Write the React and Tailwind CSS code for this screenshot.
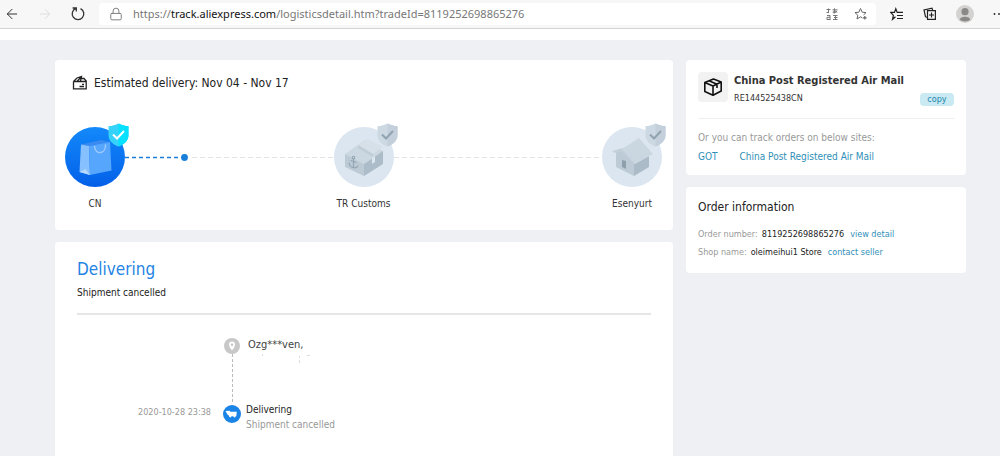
import * as React from 'react';
import { ArrowLeft, ArrowRight, Lock } from 'lucide-react';

const ORDER_ID = '8119252698865276';

function Shield({ active }) {
  return (
    <svg viewBox="0 0 21 24" className="absolute -top-1 left-[43px] h-6 w-[21px]">
      <path d="M10.5 0.5 C13.5 2 17 3 20.5 3.2 V12 C20.5 18 16 21.5 10.5 23.5 C5 21.5 0.5 18 0.5 12 V3.2 C4 3 7.5 2 10.5 0.5Z" fill={active ? '#36d2fa' : '#ccd8e2'} />
      <path d="M10.5 0.5 C13.5 2 17 3 20.5 3.2 V12 C20.5 18 16 21.5 10.5 23.5Z" fill={active ? '#06e1ff' : '#c3d0db'} />
      <path d="M5 11.5 L9 15.5 L16 8" fill="none" stroke={active ? '#fff' : '#92a3b0'} strokeWidth="2" />
    </svg>
  );
}

function BagArt() {
  return (
    <svg viewBox="0 0 60 60" className="h-[60px] w-[60px]">
      <defs>
        <linearGradient id="bagBg" x1="0" y1="0" x2="0" y2="1">
          <stop offset="0" stopColor="#1389fb" />
          <stop offset="1" stopColor="#0360e8" />
        </linearGradient>
      </defs>
      <circle cx="30" cy="30" r="30" fill="url(#bagBg)" />
      <path d="M16 17.5 L36 13 L45 15 L24 19Z" fill="#3a8af0" />
      <path d="M16 17.5 L24 19 L25 48 L14.5 45Z" fill="#86c0ff" />
      <path d="M24 19 L45 15 L46.5 43.5 L25 48Z" fill="#57a6fd" />
      <path d="M20.5 42 L25 48 L14.5 45Z" fill="#b5d9ff" />
      <path d="M29.5 19 C30 28.5 41 27.5 40.5 17.5" fill="none" stroke="#9ccbff" strokeWidth="1.4" />
    </svg>
  );
}

function CustomsArt() {
  return (
    <svg viewBox="0 0 60 60" className="h-[60px] w-[60px]">
      <circle cx="30" cy="30" r="30" fill="#dce6f1" />
      <path d="M11 27 L31 13 L49 24 L30 37Z" fill="#ccd8e1" />
      <path d="M11 27 L30 37 V49 L11 40Z" fill="#bccad5" />
      <path d="M30 37 L49 24 V37 L30 49Z" fill="#acbcc8" />
      <path d="M24 18 L34 12 L49 20 L39 27Z" fill="#d6e0e8" />
      <path d="M24 18 L39 27 V30 L24 21Z" fill="#c0cdd7" />
      <path d="M38 31 L41 29 V35 L38 37Z" fill="#dce6ee" />
      <g fill="none" stroke="#94a5b2" strokeWidth="1.1">
        <circle cx="19.5" cy="30.5" r="1.3" />
        <path d="M19.5 32 V40.5 M16.5 33.5 L22.5 35.5 M15 35.5 C15.5 40.5 22 43 24 38.5" />
      </g>
    </svg>
  );
}

function HouseArt() {
  return (
    <svg viewBox="0 0 60 60" className="h-[60px] w-[60px]">
      <circle cx="30" cy="30" r="30" fill="#dce6f1" />
      <path d="M14 25 L22 21 L32 34 V49 L14 40Z" fill="#bdcbd6" />
      <path d="M32 37 L47 29 V40 L32 49Z" fill="#abbbc7" />
      <path d="M10 24 L21 21 L34 37 L29 34 L19 24 L13 26Z" fill="#c3d0da" />
      <path d="M20 22 L37 11 L51 27 L33 37Z" fill="#cbd7e0" />
      <path d="M20 33 L24 34 V42 L20 40Z" fill="#8fa0ad" />
    </svg>
  );
}

function Stage({ label, active, children }) {
  return (
    <li className="flex w-[60px] shrink-0 flex-col items-center">
      <div className="relative">
        {children}
        <Shield active={active} />
      </div>
      <span className="mt-[9px] text-[10px] leading-4 whitespace-nowrap text-[#333]">{label}</span>
    </li>
  );
}

function BrowserBar() {
  return (
    <header className="flex h-[29px] items-center border-b border-[#d4d4d4] bg-[#f7f7f7]">
      <div className="flex w-[99px] shrink-0 items-center gap-[17px] pl-1">
        <button type="button" aria-label="Back"><ArrowLeft size={16} strokeWidth={1.5} color="#333" /></button>
        <button type="button" aria-label="Forward"><ArrowRight size={16} strokeWidth={1.5} color="#ddd" /></button>
        <button type="button" aria-label="Refresh">
          <svg viewBox="0 0 16 16" className="h-4 w-4" fill="none" stroke="#333" strokeWidth="1.3">
            <path d="M6 2.4 A5.8 5.8 0 1 0 10.5 2.6 M2.6 2 H6.3 V5.5" />
          </svg>
        </button>
      </div>
      <div className="flex h-[22px] min-w-0 flex-1 items-center rounded-sm bg-white pr-2 pl-2.5">
        <Lock size={14} strokeWidth={1.6} color="#777" className="shrink-0" />
        <a href="#track" className="ml-2.5 flex-1 truncate font-['Noto_Sans',sans-serif] text-[11px] text-[#777]">
          https://<span className="text-[#111]">track.aliexpress.com</span>/logisticsdetail.htm?tradeId={ORDER_ID}
        </a>
        <button type="button" aria-label="Translate">
          <svg viewBox="0 0 12 12" className="h-3 w-3" fill="none" stroke="#777" strokeWidth="1">
            <path d="M0.5 1.5 H4.5 M2.5 0.5 V5 M0.5 4.5 H3 M6.5 1.8 H11.5 M8.5 0.3 V5 M10.5 2.8 C10 5.5 7 5.5 7 4 C7 2.8 11 2.5 11 4.5 M1 7.5 H4 V11.5 M4 9.3 H1 V11.5 H4.5 M7 7.5 H11.5 M8 9.5 H11.5 M7 11.5 H11.5 M9.5 7 V11.5" />
          </svg>
        </button>
        <button type="button" aria-label="Add to favorites" className="ml-4">
          <svg viewBox="0 0 14 14" className="h-[14px] w-[14px]" fill="none" stroke="#666" strokeWidth="1">
            <path d="M8.5 11 L6.5 9.8 L3 12 L3.8 8.2 L1 5.6 L4.8 5.2 L6.5 1.5 L8.2 5.2 L12 5.6 L9.5 8" />
            <path d="M10.8 9 V12.6 M9 10.8 H12.6" strokeWidth="1.2" />
          </svg>
        </button>
      </div>
      <div className="flex w-[124px] shrink-0 items-center gap-[19px] overflow-hidden pl-3.5">
        <button type="button" aria-label="Favorites" className="shrink-0">
          <svg viewBox="0 0 14 14" className="h-[14px] w-[14px]" fill="none" stroke="#222" strokeWidth="1.2">
            <path d="M5.5 9.8 L2.5 12.3 L3.4 8.3 L0.8 5.4 H4.5 L5.8 1.7 L7.2 5.4 H13 M7 8.5 H13 M7 11.5 H13" />
          </svg>
        </button>
        <button type="button" aria-label="Collections" className="shrink-0">
          <svg viewBox="0 0 14 14" className="h-[14px] w-[14px]" fill="none" stroke="#222" strokeWidth="1.2">
            <path d="M4.5 3.6 H12.4 V12.4 H4.5 Z M8.5 5.5 V10.5 M6 8 H11 M3.6 10.5 L2.4 9.5 L1 3 L9 1.2 L9.6 3.2" />
          </svg>
        </button>
        <button type="button" aria-label="Profile" className="shrink-0">
          <svg viewBox="0 0 18 18" className="h-[18px] w-[18px]">
            <circle cx="9" cy="9" r="9" fill="#d4d2d0" />
            <circle cx="9" cy="6.7" r="3.6" fill="#8b8987" />
            <path d="M3.8 14.8 C3.8 10.6 14.2 10.6 14.2 14.8 C11.5 17 6.5 17 3.8 14.8Z" fill="#8b8987" />
          </svg>
        </button>
        <button type="button" aria-label="More" className="shrink-0">
          <svg viewBox="0 0 12 4" className="h-1 w-3" fill="#222">
            <circle cx="1.5" cy="2" r="0.9" />
            <circle cx="6" cy="2" r="0.9" />
            <circle cx="10.5" cy="2" r="0.9" />
          </svg>
        </button>
      </div>
    </header>
  );
}

function DeliveryCard() {
  return (
    <section className="rounded-sm bg-white pt-3.5 pr-[11px] pb-[18px] pl-2.5">
      <h2 className="flex items-center gap-1.5 pl-[7px] text-[12px] leading-[18px] text-[#222]">
        <svg viewBox="0 0 16 16" className="h-4 w-4" fill="none" stroke="#222" strokeWidth="1.3">
          <path d="M1.5 6.5 V13.8 H14.2 V6 L12 3.5 H9 M1.5 6.5 H14.2 M1.5 6.5 L5 3 L9.5 1.5 L8.5 6 M5 6.5 L9.5 1.5 M7.5 11.5 H12 M10 9.3 H12" />
        </svg>
        Estimated delivery: Nov 04 - Nov 17
      </h2>
      <ol className="mt-[35px] flex">
        <Stage label="CN" active><BagArt /></Stage>
        <li aria-hidden="true" className="mt-[27px] flex h-[7px] flex-1 items-center">
          <svg className="h-[7px] w-[63px] shrink-0">
            <path d="M0 3.5 H58" stroke="#1a7fdb" strokeWidth="1.5" strokeDasharray="4 3" />
            <circle cx="59.5" cy="3.5" r="3.4" fill="#1a7fdb" />
          </svg>
          <svg className="ml-1 h-[7px] w-full min-w-0">
            <path d="M0 3.5 H1000" stroke="#e3e3e3" strokeDasharray="5 3" />
          </svg>
        </li>
        <Stage label="TR Customs"><CustomsArt /></Stage>
        <li aria-hidden="true" className="mt-[27px] flex h-[7px] flex-1 items-center">
          <svg className="h-[7px] w-full min-w-0">
            <path d="M0 3.5 H1000" stroke="#e3e3e3" strokeDasharray="5 3" />
          </svg>
        </li>
        <Stage label="Esenyurt"><HouseArt /></Stage>
      </ol>
    </section>
  );
}

function ProgressCard() {
  return (
    <section className="flex-1 rounded-t-sm bg-white px-[22px] pt-3.5">
      <h1 className="text-[17px] leading-[26px] text-[#2484e4]">Delivering</h1>
      <p className="mt-0.5 text-[10px] leading-[18px] text-[#222]">Shipment cancelled</p>
      <hr className="mt-[11px] border-t-2 border-[#e6e6e6]" />
      <ol className="mt-[23px]">
        <li className="flex">
          <div className="w-[146px] shrink-0" />
          <div className="flex h-16 w-[18px] shrink-0 flex-col items-center">
            <svg viewBox="0 0 16 16" className="h-4 w-4 shrink-0">
              <circle cx="8" cy="8" r="8" fill="#c8c8c8" />
              <path d="M8 3.5 C4 3.5 4 8 8 12.5 C12 8 12 3.5 8 3.5Z" fill="#fff" />
              <circle cx="8" cy="6.8" r="1.3" fill="#c8c8c8" />
            </svg>
            <span className="flex-1 border-l border-dashed border-[#bbb]" />
          </div>
          <div className="ml-[7px] text-[11px] leading-[14px] text-[#444]">
            <p>Ozg***ven,</p>
            <svg viewBox="0 0 72 16" className="h-4 w-[72px]" fill="none" stroke="#ddd">
              <path d="M14.5 2 V4 M51.5 4 V6 M51.5 8 V11 M59 3.5 H62" />
            </svg>
          </div>
        </li>
        <li className="flex">
          <time className="mt-[3px] w-[146px] shrink-0 pr-3 text-right text-[9px] leading-[14px] text-[#999]">2020-10-28 23:38</time>
          <svg viewBox="0 0 18 18" className="mt-[3px] h-[18px] w-[18px] shrink-0">
            <circle cx="9" cy="9" r="9" fill="#1b84e7" />
            <path d="M2.5 6 L6.5 5.8 L7.5 6.8 H13.8 L13.3 11.3 H6.5 L4.5 9.5Z" fill="#fff" />
            <circle cx="7.3" cy="11.3" r="1.1" fill="#fff" />
            <circle cx="11.5" cy="11.3" r="1.1" fill="#fff" />
          </svg>
          <div className="ml-[5px] text-[10px] leading-[15px]">
            <p className="text-[#222]">Delivering</p>
            <p className="text-[#999]">Shipment cancelled</p>
          </div>
        </li>
      </ol>
    </section>
  );
}

function CarrierCard() {
  return (
    <section className="rounded-sm bg-white px-3 pt-3 pb-2">
      <div className="flex border-b border-[#efefef] pb-3">
        <div className="flex h-[30px] w-[30px] shrink-0 items-center justify-center rounded-sm bg-[#f2f2f2]">
          <svg viewBox="0 0 20 20" className="h-5 w-5" fill="none" stroke="#111" strokeWidth="1.6" strokeLinejoin="round">
            <path d="M1.8 5.5 L10.5 2 L18.2 5 V14 L10 18.2 L1.8 14.5 Z M1.8 5.5 L10 9 L18.2 5 M10 9 V18.2 M6 3.8 L14 7.2 V11" />
          </svg>
        </div>
        <div className="ml-1.5 flex-1">
          <h2 className="text-[11px] leading-[18px] font-bold whitespace-nowrap text-[#333]">China Post Registered Air Mail</h2>
          <p className="text-[9px] leading-4 text-[#333]">RE144525438CN</p>
        </div>
        <button type="button" className="-ml-8 h-[13px] w-[34px] shrink-0 self-end rounded-sm bg-[#c9e9f3] text-[9px] leading-[13px] text-[#1e86ab]">copy</button>
      </div>
      <p className="mt-2.5 text-[10px] leading-[18px] text-[#999]">Or you can track orders on below sites:</p>
      <div className="flex gap-[22px] text-[10px] leading-5 text-[#2f8fb8]">
        <a href="#got">GOT</a>
        <a href="#china-post">China Post Registered Air Mail</a>
      </div>
    </section>
  );
}

function OrderCard() {
  return (
    <section className="rounded-sm bg-white px-3 pt-3 pb-3">
      <h2 className="text-[12px] leading-4 text-[#222]">Order information</h2>
      <dl className="mt-2.5 text-[9px] leading-[18px]">
        <div className="flex gap-1">
          <dt className="text-[#999]">Order number:</dt>
          <dd className="text-[#222]">{ORDER_ID}</dd>
          <dd><a href="#detail" className="ml-0.5 text-[#2f8fb8]">view detail</a></dd>
        </div>
        <div className="flex gap-1">
          <dt className="text-[#999]">Shop name:</dt>
          <dd className="text-[#222]">oleimeihui1 Store</dd>
          <dd><a href="#seller" className="ml-0.5 text-[#2f8fb8]">contact seller</a></dd>
        </div>
      </dl>
    </section>
  );
}

export default function App() {
  return (
    <div className="flex min-h-screen flex-col bg-[#eff0f4] font-['DejaVu_Sans_Condensed','Noto_Sans',sans-serif]">
      <BrowserBar />
      <div className="h-[11px] bg-white" />
      <div className="flex flex-1 gap-[13px] pt-5 pr-[34px] pl-[55px]">
        <main className="flex min-w-0 flex-1 flex-col gap-3">
          <DeliveryCard />
          <ProgressCard />
        </main>
        <aside className="flex w-[280px] shrink-0 flex-col gap-3">
          <CarrierCard />
          <OrderCard />
        </aside>
      </div>
    </div>
  );
}
